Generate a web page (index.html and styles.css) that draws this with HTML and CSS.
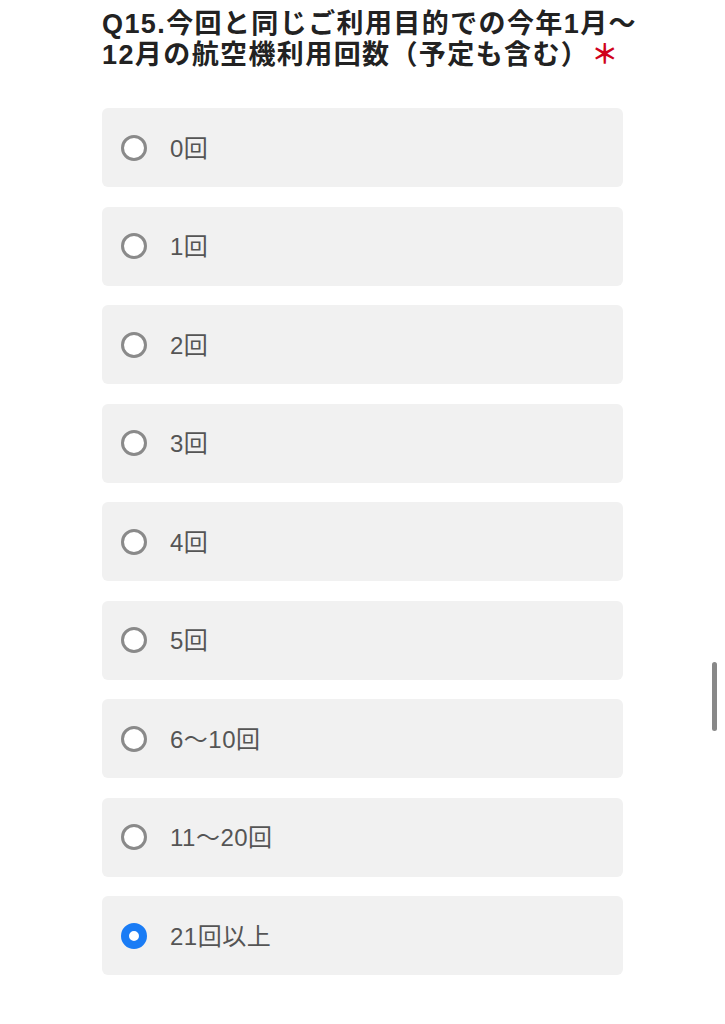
FILE: index.html
```html
<!DOCTYPE html>
<html lang="ja">
<head>
  <meta charset="UTF-8">
  <meta name="viewport" content="width=device-width, initial-scale=1.0">
  <title>Q15</title>
  <link rel="stylesheet" href="styles.css">
</head>
<body>
<div class="question">
  <h2 class="title">Q15.今回と同じご利用目的での今年1月〜12月の航空機利用回数（予定も含む）<span class="req">＊</span></h2>
  <form class="choices">
    <label class="choice"><input type="radio" name="q15"><span>0回</span></label>
    <label class="choice"><input type="radio" name="q15"><span>1回</span></label>
    <label class="choice"><input type="radio" name="q15"><span>2回</span></label>
    <label class="choice"><input type="radio" name="q15"><span>3回</span></label>
    <label class="choice"><input type="radio" name="q15"><span>4回</span></label>
    <label class="choice"><input type="radio" name="q15"><span>5回</span></label>
    <label class="choice"><input type="radio" name="q15"><span>6〜10回</span></label>
    <label class="choice"><input type="radio" name="q15"><span>11〜20回</span></label>
    <label class="choice"><input type="radio" name="q15" checked><span>21回以上</span></label>
  </form>
</div>
<div class="scrollbar"></div>
</body>
</html>
```

FILE: styles.css
```css
* {
  padding: 0;
  margin: 0;
  box-sizing: border-box;
}

body {
  background: #fff;
  font-family: "Liberation Sans", "Noto Sans CJK JP", sans-serif;
}

.question {
  width: 540px;
  margin-left: 102px;
  padding-top: 9px;
}

.title {
  font-size: 27px;
  line-height: 31px;
  font-weight: bold;
  color: #222;
  letter-spacing: 1.4px;
}

.req {
  display: inline-block;
  line-height: 31px;
  color: #d0021b;
  margin-left: 2px;
}

.choices {
  width: 521px;
  display: flex;
  flex-direction: column;
  gap: 19.5px;
  margin-top: 37px;
}

.choice {
  display: flex;
  align-items: center;
  height: 79px;
  padding-left: 19px;
  background: #f1f1f1;
  border-radius: 6px;
  font-size: 24px;
  color: #555;
  letter-spacing: 0.5px;
}

.choice span {
  margin-top: -3px;
}

.choice input {
  appearance: none;
  width: 26px;
  height: 26px;
  border: 3px solid #8a8a8a;
  border-radius: 50%;
  background: #fff;
  margin-right: 23px;
}

.choice input:checked {
  border: 8px solid #1a7cf5;
}

.scrollbar {
  position: fixed;
  left: 712px;
  top: 662px;
  width: 5px;
  height: 69px;
  border-radius: 3px;
  background: #888;
}
```
